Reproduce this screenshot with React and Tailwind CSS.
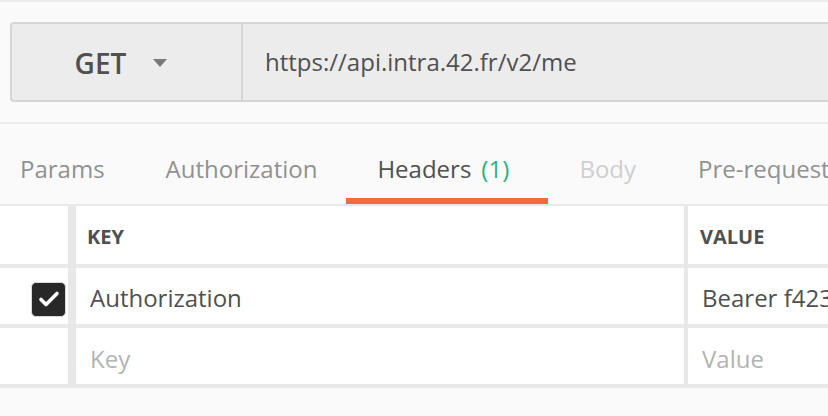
export default function App() {
  const tabs = [
    { label: "Params", color: "text-[#919191]", pad: "pl-[31px] pr-[30px]" },
    { label: "Authorization", color: "text-[#919191]", pad: "pl-[31px] pr-[29px]" },
    { label: "Headers", color: "text-[#505050]", count: "(1)", active: true, pad: "w-[202px] pl-[31px]" },
    { label: "Body", color: "text-[#cfcfcf]", pad: "px-[31px]" },
    { label: "Pre-request Script", color: "text-[#919191]", pad: "px-[31px]" },
  ];

  return (
    <div
      className="w-[828px] h-[416px] overflow-hidden bg-[#fafafa] border-t-2 border-[#ececec]"
      style={{ fontFamily: '"Open Sans", sans-serif' }}
    >
      <div className="pt-[20px] pl-[10px] h-[120px]">
        <div className="flex h-[80px] bg-[#ececec] border-y-2 border-l-2 border-[#d6d6d6] rounded-l-[4px] w-[900px]">
          <div className="w-[231px] flex items-center justify-center gap-[26px] border-r-2 border-[#d6d6d6] pr-[10px] pt-[2px]">
            <span className="text-[28px] font-semibold text-[#505050]">GET</span>
            <svg width="16" height="10" viewBox="0 0 16 10">
              <path d="M1 1h14L8 9z" fill="#7a7a7a" />
            </svg>
          </div>
          <div className="flex items-center pl-[22px] text-[24px] text-[#505050]">
            https://api.intra.42.fr/v2/me
          </div>
        </div>
      </div>

      <div className="h-[2px] bg-[#ececec]" />

      <div className="flex h-[80px] ml-[-11px] whitespace-nowrap">
        {tabs.map((t) => (
          <div
            key={t.label}
            className={`relative shrink-0 flex items-center pt-[9px] text-[24px] ${t.pad} ${t.color}`}
          >
            <span>{t.label}</span>
            {t.count && <span className="ml-[10px] text-[#26b47f]">{t.count}</span>}
            {t.active && (
              <div className="absolute left-0 right-0 bottom-0 h-[6px] bg-[#f26b3a]" />
            )}
          </div>
        ))}
      </div>

      <div className="h-[2px] bg-[#e8e8e8]" />

      <div className="bg-[#e8e8e8] flex flex-col gap-[4px] pb-[4px]">
        <div className="flex h-[58px] gap-[8px] bg-[#e8e8e8]">
          <div className="w-[68px] bg-white" />
          <div className="w-[608px] bg-white flex items-center pl-[11px] pt-[4px] text-[20px] font-bold text-[#505050]">
            KEY
          </div>
          <div className="flex-1 bg-white flex items-center pl-[12px] ml-[-4px] pt-[4px] text-[20px] font-bold text-[#505050]">
            VALUE
          </div>
        </div>
        <div className="flex h-[56px] gap-[8px]">
          <div className="w-[68px] bg-white flex items-center justify-end pr-[2px] pt-[6px]">
            <div className="w-[35px] h-[35px] rounded-[5px] bg-[#282828] border border-[#d8d8d8] flex items-center justify-center">
              <svg width="22" height="18" viewBox="0 0 22 18">
                <path d="M3 9.5l5 5L19 3.5" fill="none" stroke="white" strokeWidth="3.6" strokeLinecap="round" strokeLinejoin="round" />
              </svg>
            </div>
          </div>
          <div className="w-[608px] bg-white flex items-center pl-[14px] pt-[4px] text-[24px] text-[#505050]">
            Authorization
          </div>
          <div className="flex-1 bg-white flex items-center pl-[14px] ml-[-4px] pt-[4px] text-[24px] text-[#505050] whitespace-nowrap overflow-hidden">
            Bearer f42309bde0b7c2c4a5e8
          </div>
        </div>
        <div className="flex h-[56px] gap-[8px]">
          <div className="w-[68px] bg-white" />
          <div className="w-[608px] bg-white flex items-center pl-[14px] pt-[5px] text-[24px] text-[#b3b3b3]">
            Key
          </div>
          <div className="flex-1 bg-white flex items-center pl-[14px] ml-[-4px] pt-[5px] text-[24px] text-[#b3b3b3]">
            Value
          </div>
        </div>
      </div>
    </div>
  );
}
